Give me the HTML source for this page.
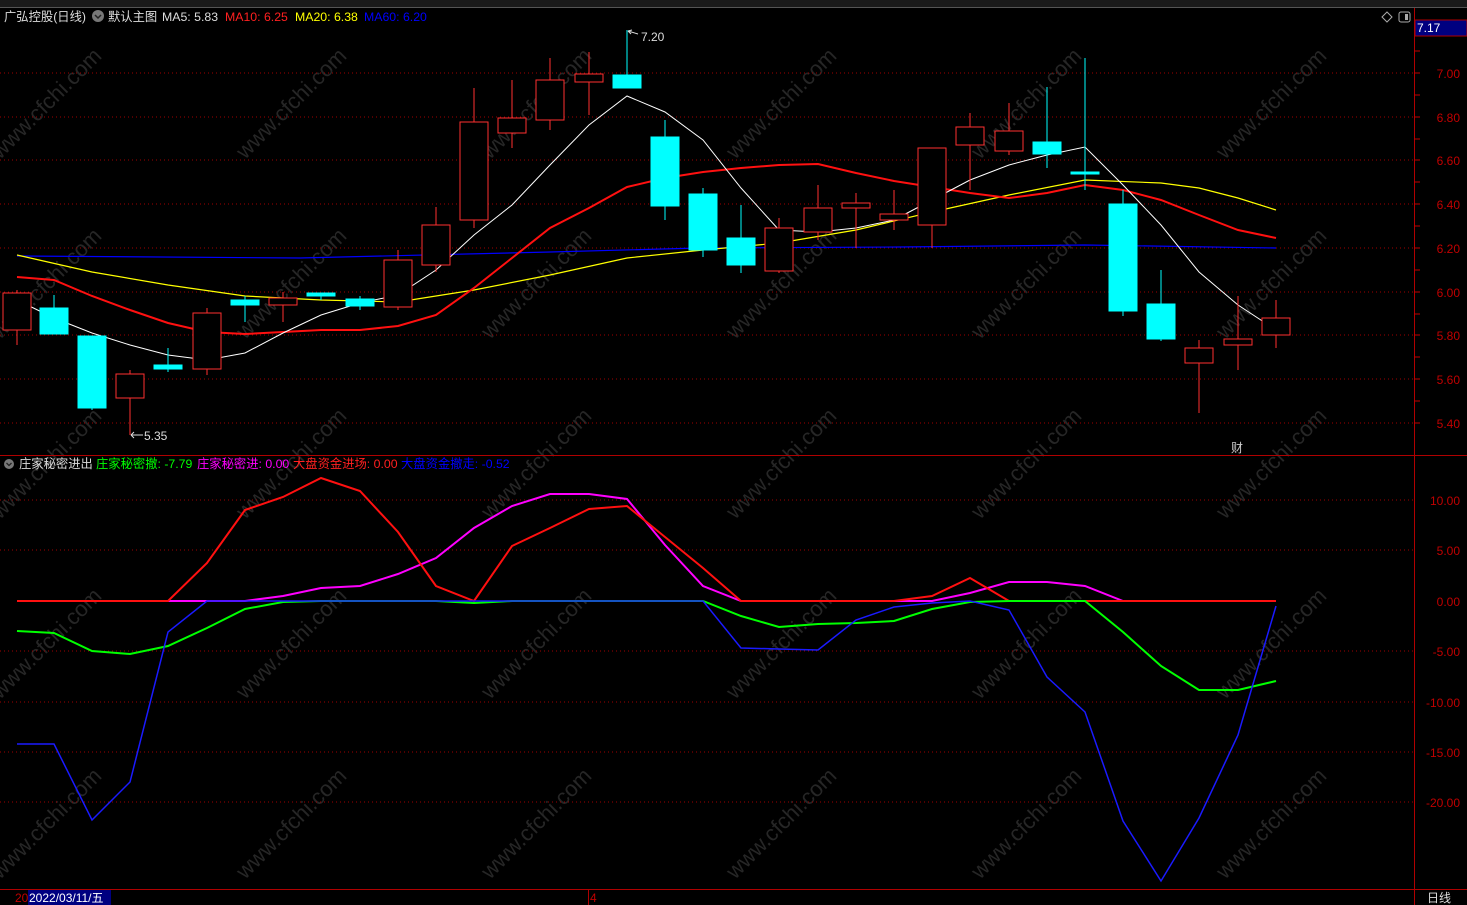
<!DOCTYPE html>
<html><head><meta charset="utf-8"><style>
body{margin:0;background:#000;width:1467px;height:905px;overflow:hidden;font-family:"Liberation Sans","Noto Sans CJK SC",sans-serif}
svg{position:absolute;left:0;top:0}
</style></head><body>
<svg width="1467" height="905" xmlns="http://www.w3.org/2000/svg" font-family="Liberation Sans, Noto Sans CJK SC, sans-serif" font-size="12">
<rect x="0" y="0" width="1467" height="7" fill="#1a1a1a"/>
<line x1="0" y1="7.5" x2="1467" y2="7.5" stroke="#555"/>
<g fill="#262626" font-size="22">
<text transform="translate(0,160) rotate(-45)">www.cfchi.com</text>
<text transform="translate(245,160) rotate(-45)">www.cfchi.com</text>
<text transform="translate(490,160) rotate(-45)">www.cfchi.com</text>
<text transform="translate(735,160) rotate(-45)">www.cfchi.com</text>
<text transform="translate(980,160) rotate(-45)">www.cfchi.com</text>
<text transform="translate(1225,160) rotate(-45)">www.cfchi.com</text>
<text transform="translate(0,340) rotate(-45)">www.cfchi.com</text>
<text transform="translate(245,340) rotate(-45)">www.cfchi.com</text>
<text transform="translate(490,340) rotate(-45)">www.cfchi.com</text>
<text transform="translate(735,340) rotate(-45)">www.cfchi.com</text>
<text transform="translate(980,340) rotate(-45)">www.cfchi.com</text>
<text transform="translate(1225,340) rotate(-45)">www.cfchi.com</text>
<text transform="translate(0,520) rotate(-45)">www.cfchi.com</text>
<text transform="translate(245,520) rotate(-45)">www.cfchi.com</text>
<text transform="translate(490,520) rotate(-45)">www.cfchi.com</text>
<text transform="translate(735,520) rotate(-45)">www.cfchi.com</text>
<text transform="translate(980,520) rotate(-45)">www.cfchi.com</text>
<text transform="translate(1225,520) rotate(-45)">www.cfchi.com</text>
<text transform="translate(0,700) rotate(-45)">www.cfchi.com</text>
<text transform="translate(245,700) rotate(-45)">www.cfchi.com</text>
<text transform="translate(490,700) rotate(-45)">www.cfchi.com</text>
<text transform="translate(735,700) rotate(-45)">www.cfchi.com</text>
<text transform="translate(980,700) rotate(-45)">www.cfchi.com</text>
<text transform="translate(1225,700) rotate(-45)">www.cfchi.com</text>
<text transform="translate(0,880) rotate(-45)">www.cfchi.com</text>
<text transform="translate(245,880) rotate(-45)">www.cfchi.com</text>
<text transform="translate(490,880) rotate(-45)">www.cfchi.com</text>
<text transform="translate(735,880) rotate(-45)">www.cfchi.com</text>
<text transform="translate(980,880) rotate(-45)">www.cfchi.com</text>
<text transform="translate(1225,880) rotate(-45)">www.cfchi.com</text>
</g>
<line x1="1414.5" y1="8" x2="1414.5" y2="905" stroke="#b00000"/>
<line x1="0" y1="455.5" x2="1467" y2="455.5" stroke="#b00000"/>
<line x1="0" y1="889.5" x2="1467" y2="889.5" stroke="#b00000"/>
<g stroke="#a00000" stroke-dasharray="1,3">
<line x1="0" y1="73" x2="1414" y2="73"/><line x1="0" y1="117" x2="1414" y2="117"/><line x1="0" y1="160" x2="1414" y2="160"/><line x1="0" y1="204" x2="1414" y2="204"/><line x1="0" y1="248" x2="1414" y2="248"/><line x1="0" y1="292" x2="1414" y2="292"/><line x1="0" y1="335" x2="1414" y2="335"/><line x1="0" y1="379" x2="1414" y2="379"/><line x1="0" y1="423" x2="1414" y2="423"/>
<line x1="0" y1="500" x2="1414" y2="500"/><line x1="0" y1="550" x2="1414" y2="550"/><line x1="0" y1="651" x2="1414" y2="651"/><line x1="0" y1="702" x2="1414" y2="702"/><line x1="0" y1="752" x2="1414" y2="752"/><line x1="0" y1="802" x2="1414" y2="802"/>
</g>
<g fill="#c00000" text-anchor="end" font-size="12">
<text x="1460" y="78">7.00</text><text x="1460" y="122">6.80</text><text x="1460" y="165">6.60</text><text x="1460" y="209">6.40</text><text x="1460" y="253">6.20</text><text x="1460" y="297">6.00</text><text x="1460" y="340">5.80</text><text x="1460" y="384">5.60</text><text x="1460" y="428">5.40</text>
<text x="1460" y="505">10.00</text><text x="1460" y="555">5.00</text><text x="1460" y="606">0.00</text><text x="1460" y="656">-5.00</text><text x="1460" y="707">-10.00</text><text x="1460" y="757">-15.00</text><text x="1460" y="807">-20.00</text>
</g>
<g stroke="#c00000">
<line x1="1414" y1="51" x2="1420" y2="51"/><line x1="1414" y1="95" x2="1420" y2="95"/><line x1="1414" y1="139" x2="1420" y2="139"/><line x1="1414" y1="182" x2="1420" y2="182"/><line x1="1414" y1="226" x2="1420" y2="226"/><line x1="1414" y1="270" x2="1420" y2="270"/><line x1="1414" y1="314" x2="1420" y2="314"/><line x1="1414" y1="357" x2="1420" y2="357"/><line x1="1414" y1="401" x2="1420" y2="401"/>
<line x1="1414" y1="73" x2="1420" y2="73"/><line x1="1414" y1="117" x2="1420" y2="117"/><line x1="1414" y1="160" x2="1420" y2="160"/><line x1="1414" y1="204" x2="1420" y2="204"/><line x1="1414" y1="248" x2="1420" y2="248"/><line x1="1414" y1="292" x2="1420" y2="292"/><line x1="1414" y1="335" x2="1420" y2="335"/><line x1="1414" y1="379" x2="1420" y2="379"/><line x1="1414" y1="423" x2="1420" y2="423"/>
</g>
<rect x="1415" y="20" width="52" height="16" fill="#000080" stroke="#b00000"/>
<text x="1417" y="32" fill="#fff" font-size="12">7.17</text>
<path d="M1382 17 l5 -5 l5 5 l-5 5z" fill="none" stroke="#aaa"/>
<rect x="1399" y="12" width="11" height="10" rx="2" fill="none" stroke="#aaa"/><rect x="1405" y="14" width="3" height="6" fill="#aaa"/>
<g font-size="12.3">
<text x="4" y="21" fill="#ddd">广弘控股(日线)</text>
<circle cx="98" cy="16" r="6" fill="#777"/><path d="M95 15 l3 3 l3 -3" stroke="#222" fill="none" stroke-width="1.5"/>
<text x="108" y="21" fill="#ddd">默认主图</text>
<text x="162" y="21" fill="#ddd">MA5: 5.83</text>
<text x="225" y="21" fill="#ff2020">MA10: 6.25</text>
<text x="295" y="21" fill="#ffff00">MA20: 6.38</text>
<text x="364" y="21" fill="#0000ff">MA60: 6.20</text>
<circle cx="9" cy="464" r="5" fill="#777"/><path d="M6.5 463 l2.5 2.5 l2.5 -2.5" stroke="#222" fill="none" stroke-width="1.3"/>
<text x="19" y="468" fill="#ddd">庄家秘密进出</text>
<text x="96" y="468" fill="#00ff00">庄家秘密撤: -7.79</text>
<text x="197" y="468" fill="#ff00ff">庄家秘密进: 0.00</text>
<text x="293" y="468" fill="#ff2020">大盘资金进场: 0.00</text>
<text x="401" y="468" fill="#0000ff">大盘资金撤走: -0.52</text>
</g>
<polyline fill="none" stroke="#0000ff" stroke-width="1.2" points="17,256 300,258 550,252 700,248 900,247 1085,245 1276,248"/>
<polyline fill="none" stroke="#ffff00" stroke-width="1.2" points="17,255 92,272 168,285 245,296 321,300 398,302 474,290 550,275 627,258 703,250 779,243 856,230 932,212 1009,195 1085,180 1161,183 1199,188 1238,198 1276,210"/>
<polyline fill="none" stroke="#ff1010" stroke-width="2" points="17,277 54,280 92,296 130,310 168,323 207,332 245,334 283,332 321,330 360,330 398,326 436,315 474,288 512,258 550,228 589,208 627,187 665,178 703,172 741,168 779,165 818,164 856,173 894,181 932,187 970,193 1009,198 1047,193 1085,185 1123,190 1161,200 1199,215 1238,230 1276,238"/>
<polyline fill="none" stroke="#fff" stroke-width="1" points="17,300 54,318 92,333 130,345 168,355 207,360 245,353 283,333 321,315 360,303 398,295 436,270 474,235 512,205 550,165 589,125 627,96 665,112 703,140 741,188 779,230 818,232 856,228 894,220 932,200 970,180 1009,165 1047,155 1085,147 1123,185 1161,225 1199,272 1238,305 1276,330"/>
<g stroke-width="1">
<g stroke="#ff3030" fill="#000">
<line x1="17" y1="290" x2="17" y2="345"/><rect x="3" y="293" width="28" height="37"/>
<line x1="130" y1="370" x2="130" y2="435"/><rect x="116" y="374" width="28" height="24"/>
<line x1="207" y1="308" x2="207" y2="375"/><rect x="193" y="313" width="28" height="56"/>
<line x1="283" y1="292" x2="283" y2="322"/><rect x="269" y="298" width="28" height="7"/>
<line x1="398" y1="250" x2="398" y2="310"/><rect x="384" y="260" width="28" height="47"/>
<line x1="436" y1="207" x2="436" y2="272"/><rect x="422" y="225" width="28" height="40"/>
<line x1="474" y1="88" x2="474" y2="228"/><rect x="460" y="122" width="28" height="98"/>
<line x1="512" y1="80" x2="512" y2="148"/><rect x="498" y="118" width="28" height="15"/>
<line x1="550" y1="58" x2="550" y2="130"/><rect x="536" y="80" width="28" height="40"/>
<line x1="589" y1="52" x2="589" y2="115"/><rect x="575" y="74" width="28" height="8"/>
<line x1="779" y1="218" x2="779" y2="273"/><rect x="765" y="228" width="28" height="43"/>
<line x1="818" y1="185" x2="818" y2="240"/><rect x="804" y="208" width="28" height="24"/>
<line x1="856" y1="193" x2="856" y2="248"/><rect x="842" y="203" width="28" height="5"/>
<line x1="894" y1="190" x2="894" y2="230"/><rect x="880" y="214" width="28" height="6"/>
<line x1="932" y1="148" x2="932" y2="248"/><rect x="918" y="148" width="28" height="77"/>
<line x1="970" y1="113" x2="970" y2="190"/><rect x="956" y="127" width="28" height="18"/>
<line x1="1009" y1="103" x2="1009" y2="155"/><rect x="995" y="131" width="28" height="20"/>
<line x1="1199" y1="340" x2="1199" y2="413"/><rect x="1185" y="348" width="28" height="15"/>
<line x1="1238" y1="296" x2="1238" y2="370"/><rect x="1224" y="339" width="28" height="6"/>
<line x1="1276" y1="300" x2="1276" y2="348"/><rect x="1262" y="318" width="28" height="17"/>
</g>
<g stroke="#00ffff" fill="#00ffff">
<line x1="54" y1="295" x2="54" y2="334"/><rect x="40" y="308" width="28" height="26"/>
<line x1="92" y1="336" x2="92" y2="410"/><rect x="78" y="336" width="28" height="72"/>
<line x1="168" y1="348" x2="168" y2="372"/><rect x="154" y="365" width="28" height="4"/>
<line x1="245" y1="296" x2="245" y2="322"/><rect x="231" y="300" width="28" height="5"/>
<line x1="321" y1="293" x2="321" y2="300"/><rect x="307" y="293" width="28" height="3"/>
<line x1="360" y1="296" x2="360" y2="310"/><rect x="346" y="299" width="28" height="7"/>
<line x1="627" y1="30" x2="627" y2="88"/><rect x="613" y="75" width="28" height="13"/>
<line x1="665" y1="120" x2="665" y2="220"/><rect x="651" y="137" width="28" height="69"/>
<line x1="703" y1="188" x2="703" y2="257"/><rect x="689" y="194" width="28" height="56"/>
<line x1="741" y1="205" x2="741" y2="273"/><rect x="727" y="238" width="28" height="27"/>
<line x1="1047" y1="87" x2="1047" y2="168"/><rect x="1033" y="142" width="28" height="12"/>
<line x1="1085" y1="58" x2="1085" y2="190"/><rect x="1071" y="172" width="28" height="2"/>
<line x1="1123" y1="190" x2="1123" y2="316"/><rect x="1109" y="204" width="28" height="107"/>
<line x1="1161" y1="270" x2="1161" y2="341"/><rect x="1147" y="304" width="28" height="35"/>
</g>
</g>
<text x="641" y="41" fill="#ddd">7.20</text><path d="M628 31 l10 3" stroke="#ddd"/><path d="M628 31 l4 -1 M628 31 l3 3" stroke="#ddd"/>
<text x="144" y="440" fill="#ddd">5.35</text><path d="M131 435 l12 0 M131 435 l3 -3 M131 435 l3 3" stroke="#ddd" fill="none"/>
<text x="1231" y="452" fill="#ccc">财</text>
<polyline fill="none" stroke="#ff00ff" stroke-width="2" points="17,601 245,601 283,596 321,588 360,586 398,574 436,558 474,528 512,506 550,494 589,494 627,499 665,545 703,586 741,601 932,601 970,593 1009,582 1047,582 1085,586 1123,601 1276,601"/>
<polyline fill="none" stroke="#ff1010" stroke-width="2" points="17,601 168,601 207,563 245,510 283,497 321,478 360,491 398,532 436,586 474,601 512,546 550,528 589,509 627,506 665,537 703,568 741,601 894,601 932,596 970,578 1009,601 1276,601"/>
<polyline fill="none" stroke="#00ff00" stroke-width="2" points="17,631 54,633 92,651 130,654 168,646 207,628 245,609 283,602 321,601 436,601 474,603 512,601 703,601 741,616 779,627 818,624 856,623 894,621 932,609 970,602 1009,601 1085,601 1123,632 1161,666 1199,690 1238,690 1276,681"/>
<polyline fill="none" stroke="#1a1aff" stroke-width="1.5" points="17,744 54,744 92,820 130,782 168,632 207,601 703,601 741,648 779,649 818,650 856,620 894,607 932,603 970,601 1009,610 1047,677 1085,712 1123,821 1161,881 1199,818 1238,735 1276,606"/>
<text x="15" y="902" fill="#c00000">20</text>
<rect x="28" y="890" width="83" height="15" fill="#000080"/>
<text x="29" y="902" fill="#fff">2022/03/11/五</text>
<line x1="588.5" y1="890" x2="588.5" y2="905" stroke="#b00000"/>
<text x="590" y="902" fill="#c00000">4</text>
<text x="1427" y="902" fill="#ddd">日线</text>
</svg>
</body></html>
